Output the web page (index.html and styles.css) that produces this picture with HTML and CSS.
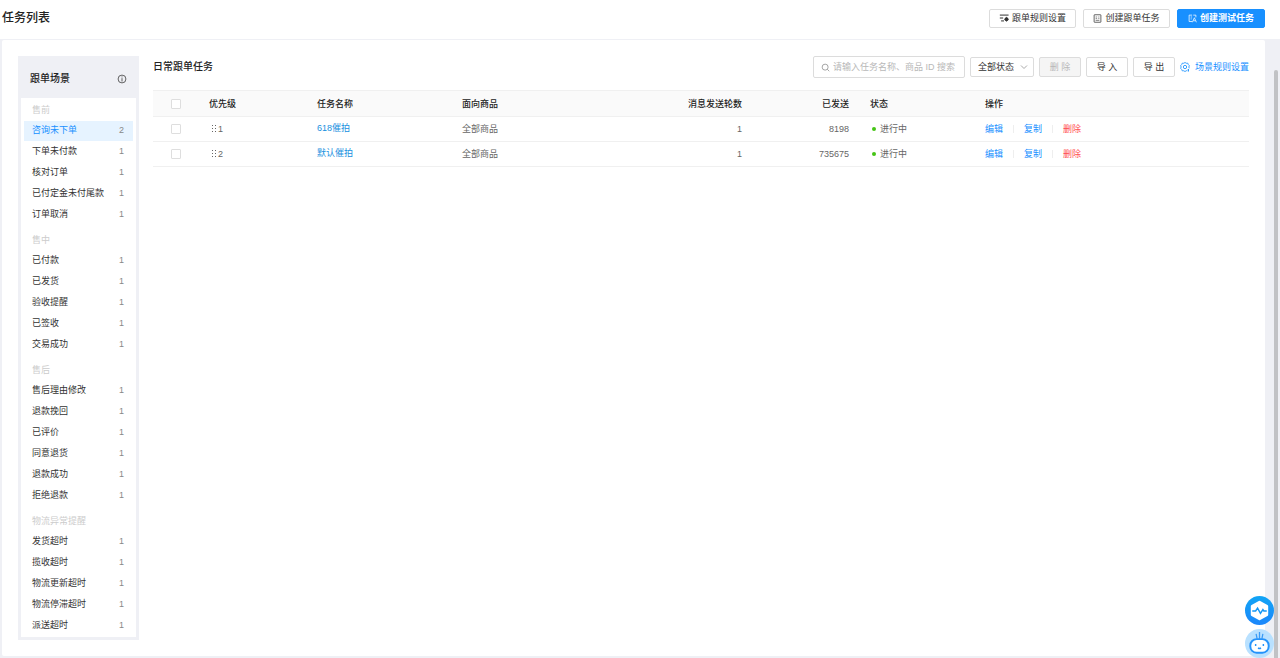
FILE: index.html
```html
<!DOCTYPE html>
<html lang="zh-CN">
<head>
<meta charset="utf-8">
<title>任务列表</title>
<link rel="stylesheet" href="styles.css">
</head>
<body>
<header class="topbar">
  <h1 class="page-title">任务列表</h1>
  <div class="top-actions">
    <button class="btn btn-top" type="button"><svg class="icon icon-rules" viewBox="0 0 12 12" fill="none" stroke="currentColor"><path d="M1 2.500h10.500M1 6h4M2.500 9.500h3.500" stroke-width="1.200"/><circle cx="9" cy="7.500" r="2.300" fill="currentColor" stroke="none"/><path d="M9 4.600v5.800M6.200 7.500h5.600" stroke-width=".8"/></svg>跟单规则设置</button>
    <button class="btn btn-top" type="button"><svg class="icon" viewBox="0 0 12 12" fill="none" stroke="currentColor"><rect x="1.500" y="1" width="9" height="10" rx=".5"/><path d="M3.500 4h2M7 4h1.500M3.500 6.200h2M7 6.200h1.500M3.500 8.500h5" stroke-width=".8"/></svg>创建跟单任务</button>
    <button class="btn btn-top btn-primary" type="button"><svg class="icon" viewBox="0 0 12 12" fill="none" stroke="currentColor"><path d="M5.500 1.500h-4v8.500h4M3.500 4h2M3.500 6.500h1.500M7 1.500h3.500v3"/><path d="M5.800 11l2.700-6 2.700 6M7 9h3"/></svg>创建测试任务</button>
  </div>
</header>
<div class="workspace">
  <div class="panel">
    <aside class="scenes">
      <div class="scenes-head">
        <h2 class="heading">跟单场景</h2>
        <svg class="info" viewBox="0 0 12 12" fill="none" stroke="currentColor"><circle cx="6" cy="6" r="4.700"/><path d="M6 5v4M6 3v1.100"/></svg>
      </div>
      <nav class="scenes-body">
        <section class="group">
          <h3 class="group-title">售前</h3>
          <a class="scene active" href="#"><span>咨询未下单</span><span class="count">2</span></a>
          <a class="scene" href="#"><span>下单未付款</span><span class="count">1</span></a>
          <a class="scene" href="#"><span>核对订单</span><span class="count">1</span></a>
          <a class="scene" href="#"><span>已付定金未付尾款</span><span class="count">1</span></a>
          <a class="scene" href="#"><span>订单取消</span><span class="count">1</span></a>
        </section>
        <section class="group">
          <h3 class="group-title">售中</h3>
          <a class="scene" href="#"><span>已付款</span><span class="count">1</span></a>
          <a class="scene" href="#"><span>已发货</span><span class="count">1</span></a>
          <a class="scene" href="#"><span>验收提醒</span><span class="count">1</span></a>
          <a class="scene" href="#"><span>已签收</span><span class="count">1</span></a>
          <a class="scene" href="#"><span>交易成功</span><span class="count">1</span></a>
        </section>
        <section class="group">
          <h3 class="group-title">售后</h3>
          <a class="scene" href="#"><span>售后理由修改</span><span class="count">1</span></a>
          <a class="scene" href="#"><span>退款挽回</span><span class="count">1</span></a>
          <a class="scene" href="#"><span>已评价</span><span class="count">1</span></a>
          <a class="scene" href="#"><span>同意退货</span><span class="count">1</span></a>
          <a class="scene" href="#"><span>退款成功</span><span class="count">1</span></a>
          <a class="scene" href="#"><span>拒绝退款</span><span class="count">1</span></a>
        </section>
        <section class="group">
          <h3 class="group-title">物流异常提醒</h3>
          <a class="scene" href="#"><span>发货超时</span><span class="count">1</span></a>
          <a class="scene" href="#"><span>揽收超时</span><span class="count">1</span></a>
          <a class="scene" href="#"><span>物流更新超时</span><span class="count">1</span></a>
          <a class="scene" href="#"><span>物流停滞超时</span><span class="count">1</span></a>
          <a class="scene" href="#"><span>派送超时</span><span class="count">1</span></a>
        </section>
      </nav>
    </aside>
    <main class="tasks">
      <div class="toolbar">
        <h2 class="heading">日常跟单任务</h2>
        <div class="tools">
          <label class="search">
            <svg class="icon" viewBox="0 0 12 12" fill="none" stroke="currentColor"><circle cx="5.500" cy="5.500" r="4"/><path d="M8.500 8.500l2.500 2.500"/></svg>
            <input class="search-input" type="text" aria-label="搜索任务" placeholder="请输入任务名称、商品 ID 搜索">
          </label>
          <div class="select-wrap">
            <select class="select" aria-label="状态"><option>全部状态</option></select>
            <svg class="chevron" viewBox="0 0 8 8" fill="none" stroke="currentColor"><path d="M1 2.500l3 3 3-3"/></svg>
          </div>
          <button class="btn btn-tool" type="button" disabled>删 除</button>
          <button class="btn btn-tool" type="button">导 入</button>
          <button class="btn btn-tool" type="button">导 出</button>
          <a class="rule-link" href="#"><svg class="gear" viewBox="0 0 12 12" fill="none" stroke="currentColor"><path d="M8.500 10.300l-1 .2L6 11.400l-1.500-.9-1.800.1-.7-1.700L.8 7.600 1.400 6 .8 4.400 2 3.100l.7-1.700 1.800.1L6 .6l1.500.9 1.800-.1.700 1.700 1.200 1.300L10.600 6l.5 1.500"/><circle cx="6" cy="6" r="2"/><path d="M10 8.500v3" stroke-width="1.400"/></svg>场景规则设置</a>
        </div>
      </div>
      <table class="table">
        <colgroup><col class="c-check"><col class="c-rank"><col class="c-name"><col class="c-goods"><col class="c-rounds"><col class="c-sent"><col class="c-state"><col class="c-ops"></colgroup>
        <thead>
          <tr><th class="check"><input class="box" type="checkbox" aria-label="全选"></th><th>优先级</th><th>任务名称</th><th>面向商品</th><th class="num">消息发送轮数</th><th class="num">已发送</th><th class="state">状态</th><th>操作</th></tr>
        </thead>
        <tbody>
          <tr>
            <td class="check"><input class="box" type="checkbox" aria-label="选择 618催拍"></td>
            <td><span class="rank"><svg class="grip" viewBox="0 0 6 8" fill="currentColor"><path d="M1 0h1v1H1zM4 0h1v1H4zM1 3h1v1H1zM4 3h1v1H4zM1 6h1v1H1zM4 6h1v1H4z"/></svg>1</span></td>
            <td class="name"><a class="name-link" href="#">618催拍</a></td>
            <td>全部商品</td><td class="num">1</td><td class="num">8198</td>
            <td class="state"><span class="status">进行中</span></td>
            <td><div class="ops"><a class="op" href="#">编辑</a><a class="op" href="#">复制</a><a class="op danger" href="#">删除</a></div></td>
          </tr>
          <tr>
            <td class="check"><input class="box" type="checkbox" aria-label="选择 默认催拍"></td>
            <td><span class="rank"><svg class="grip" viewBox="0 0 6 8" fill="currentColor"><path d="M1 0h1v1H1zM4 0h1v1H4zM1 3h1v1H1zM4 3h1v1H4zM1 6h1v1H1zM4 6h1v1H4z"/></svg>2</span></td>
            <td class="name"><a class="name-link" href="#">默认催拍</a></td>
            <td>全部商品</td><td class="num">1</td><td class="num">735675</td>
            <td class="state"><span class="status">进行中</span></td>
            <td><div class="ops"><a class="op" href="#">编辑</a><a class="op" href="#">复制</a><a class="op danger" href="#">删除</a></div></td>
          </tr>
        </tbody>
      </table>
    </main>
  </div>
</div>
<div class="scroll-thumb"></div>
<div class="floaters">
  <button class="float pulse" type="button" aria-label="健康诊断"><svg viewBox="0 0 30 30" fill="none"><path d="M15 6.500l7.500 4.200v8.600L15 23.500l-7.500-4.200v-8.600z" fill="#fff" stroke="#fff" stroke-width="3" stroke-linejoin="round"/><path d="M7.500 15.500h3.500l2-3 3 5.500 2.500-4 1 1.500h3" stroke="#1597f5" stroke-width="1.500"/></svg></button>
  <button class="float robot" type="button" aria-label="智能助手"><svg viewBox="0 0 30 30" fill="none"><path d="M15 3v7M11.500 5l1 5M18.500 5l-1 5" stroke="#3b9bf5" stroke-width="1.300"/><rect x="5.500" y="10.500" width="19" height="14" rx="6.500" fill="#fff" stroke="#2593fb" stroke-width="2"/><path d="M11 15.500v2M19 15.500v2M13.500 19.500q1.500 1.300 3 0" stroke="#2593fb" stroke-width="1.500"/></svg></button>
</div>
</body>
</html>
```
FILE: styles.css
```css
* { box-sizing: border-box; }
body {
  margin: 0;
  min-height: 100vh;
  display: flex;
  flex-direction: column;
  background: #fff;
  color: #333;
  font: 9px/16px "Liberation Sans", "Noto Sans CJK SC", sans-serif;
  overflow: hidden;
}
h1, h2, h3 { margin: 0; }
a { color: inherit; text-decoration: none; }
button, input, select { font: inherit; color: inherit; }

.topbar {
  display: flex;
  align-items: center;
  justify-content: space-between;
  height: 39px;
  padding: 0 15px 3px 2px;
}
.page-title { font-size: 12px; font-weight: 500; color: #222; }
.top-actions { display: flex; gap: 7px; }
.btn {
  display: flex;
  align-items: center;
  justify-content: center;
  gap: 3px;
  border: 1px solid #dcdcdc;
  border-radius: 2px;
  background: #fff;
  padding: 0;
}
.btn-top { width: 87px; height: 19px; }
.btn-primary { width: 88px; border-color: #1890ff; background: #1890ff; color: #fff; font-weight: 700; }
.icon { width: 9px; height: 9px; flex: none; }
.icon-rules { width: 10px; height: 10px; }

.workspace {
  flex: 1;
  background: #eff0f5;
  padding: 1px 15px 1px 2px;
}
.panel {
  display: flex;
  align-items: flex-start;
  gap: 14px;
  min-height: 100%;
  padding: 16px;
  background: #fff;
  border-radius: 2px;
}

.scenes {
  flex: none;
  width: 121px;
  border: 3px solid #eff0f5;
  border-top: 0;
}
.scenes-head {
  display: flex;
  align-items: center;
  justify-content: space-between;
  height: 42px;
  padding: 4px 9px 0;
  background: #eff0f5;
}
.heading { font-size: 10px; font-weight: 500; color: #222; }
.info { width: 10px; height: 10px; color: #444; }
.scenes-body { padding: 2px 3px 1px; }
.group + .group { margin-top: 5px; }
.group-title { padding-left: 8px; font-size: 9px; font-weight: 400; line-height: 20px; color: #ccc; }
.scene {
  display: flex;
  justify-content: space-between;
  margin-top: 1px;
  padding: 0 9px 2px 8px;
  line-height: 18px;
}
.count { color: #888; }
.active { background: #e6f3ff; color: #1890ff; }

.tasks { flex: 1; min-width: 0; }
.toolbar {
  display: flex;
  align-items: center;
  justify-content: space-between;
  height: 22px;
  margin-bottom: 12px;
}
.tools { display: flex; align-items: center; gap: 5px; }
.search {
  display: flex;
  align-items: center;
  gap: 3px;
  width: 152px;
  height: 22px;
  padding: 0 7px;
  border: 1px solid #dcdcdc;
  border-radius: 2px;
  color: #888;
}
.search-input { flex: 1; min-width: 0; padding: 0; border: 0; outline: 0; background: none; }
.search-input::placeholder { color: #b8b8b8; }
.select-wrap { position: relative; color: #333; }
.select {
  display: block;
  appearance: none;
  width: 64px;
  height: 20px;
  padding: 0 7px;
  border: 1px solid #dcdcdc;
  border-radius: 2px;
  background: #fff;
}
.chevron { position: absolute; right: 6px; top: 6px; width: 8px; height: 8px; color: #aaa; pointer-events: none; }
.btn-tool { width: 42px; height: 20px; }
.btn-tool:disabled { background: #f5f5f5; color: #b8b8b8; }
.rule-link { display: flex; align-items: center; gap: 5px; color: #1890ff; }
.gear { width: 10px; height: 10px; }

.table { width: 100%; table-layout: fixed; border-collapse: collapse; }
.c-check { width: 48px; }
.c-rank { width: 108px; }
.c-name { width: 145px; }
.c-goods { width: 188px; }
.c-rounds { width: 108px; }
.c-sent { width: 107px; }
.c-state { width: 120px; }
.c-ops { width: 272px; }
.table th, .table td { height: 25px; padding: 0 8px; text-align: left; border-bottom: 1px solid #f0f0f0; }
.table th { height: 26px; background: #fafafa; color: #222; font-weight: 500; border-top: 1px solid #f0f0f0; }
.table td { color: #666; }
.table .num { text-align: right; }
.table .check { padding: 0 0 0 18px; }
.table .state { padding-left: 13px; }
.table .name { padding-bottom: 3px; }
.box {
  display: block;
  appearance: none;
  width: 10px;
  height: 10px;
  margin: 0;
  border: 1px solid #dedede;
  border-radius: 1px;
  background: #fff;
}
.rank { display: flex; align-items: center; gap: 1px; padding-left: 2px; }
.grip { width: 6px; height: 8px; }
.name-link { color: #1890e0; }
.status { display: flex; align-items: center; gap: 4px; padding-left: 2px; }
.status::before { content: ""; width: 4px; height: 4px; border-radius: 50%; background: #45c415; }
.ops { display: flex; align-items: center; color: #1890ff; }
.op + .op { margin-left: 10px; padding-left: 10px; border-left: 1px solid #eee; line-height: 8px; }
.danger { color: #ff4d4f; }

.scroll-thumb {
  position: fixed;
  top: 70px;
  right: 2px;
  bottom: 0;
  width: 4px;
  border-radius: 2px 2px 0 0;
  background: #c1c2c5;
}
.floaters { position: fixed; right: 6px; bottom: 0; display: grid; gap: 4px; }
.float { width: 29px; height: 29px; padding: 0; border: 0; border-radius: 50%; }
.float svg { display: block; width: 100%; height: 100%; }
.pulse { background: linear-gradient(#12a5f5, #1b86fb); }
.robot { background: #b9e1ff; }
```
